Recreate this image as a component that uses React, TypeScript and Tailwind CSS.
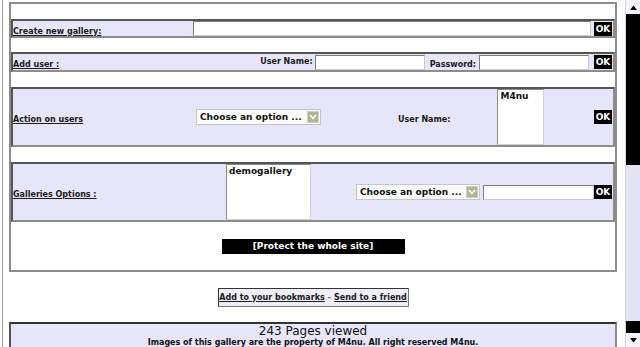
import type { ReactNode } from "react";

function OkButton({ className = "" }: { className?: string }) {
  return (
    <div
      className={`w-[18px] h-[14px] bg-black text-white text-[9px] font-bold leading-[14px] text-center shrink-0 ${className}`}
    >
      OK
    </div>
  );
}

function TextBox({ width, className = "" }: { width: string; className?: string }) {
  return (
    <div
      className={`${width} h-[15px] bg-white border border-[#7c7c7c] border-r-[#c9c9d0] border-b-[#c9c9d0] shrink-0 ${className}`}
    />
  );
}

function SelectBox({ width, className = "" }: { width: string; className?: string }) {
  return (
    <div
      className={`${width} h-[16px] bg-[#fbfbfb] border border-[#c4c4cc] flex items-center justify-between pl-[3px] pr-[1px] shrink-0 ${className}`}
    >
      <span className="text-[9px] font-bold text-[#111] leading-none whitespace-nowrap">Choose an option ...</span>
      <div className="w-[12px] h-[12px] bg-[#a9b797] border border-[#c8d2bc] flex items-center justify-center">
        <svg width="8" height="6" viewBox="0 0 8 6">
          <path d="M1 1 L4 4.5 L7 1" stroke="white" strokeWidth="1.6" fill="none" />
        </svg>
      </div>
    </div>
  );
}

function ListBox({ width, item, className = "" }: { width: string; item: string; className?: string }) {
  return (
    <div
      className={`${width} h-[56px] bg-white border border-[#8a8a8a] border-r-[#d0d0d8] border-b-[#d0d0d8] pl-[2px] pt-[1px] shrink-0 ${className}`}
    >
      <div className="text-[9px] font-bold text-[#111] leading-[11px]">{item}</div>
    </div>
  );
}

function Label({ children }: { children: ReactNode }) {
  return (
    <span className="text-[8px] font-bold text-[#1a1a1a] underline underline-offset-1 whitespace-nowrap">
      {children}
    </span>
  );
}

function Row({ children, className = "" }: { children: ReactNode; className?: string }) {
  return (
    <div
      className={`bg-[#e6e6f8] border-2 border-t-[#555] border-l-[#555] border-b-[#8c8c8c] border-r-[#8c8c8c] flex items-center pr-[1px] shrink-0 ${className}`}
    >
      {children}
    </div>
  );
}

function Field({ children }: { children: ReactNode }) {
  return <span className="text-[8px] font-bold text-[#1a1a1a] whitespace-nowrap">{children}</span>;
}

function Scrollbar() {
  return (
    <div className="w-[15px] h-[347px] flex flex-col bg-[#e4e4f4] border-l border-[#d4d4dc] shrink-0">
      <div className="h-[14px] bg-[#f4f4fa] flex items-center justify-center">
        <svg width="7" height="5" viewBox="0 0 7 5">
          <path d="M0 5 L3.5 0.5 L7 5 Z" fill="black" />
        </svg>
      </div>
      <div className="h-[151px] bg-black" />
      <div className="flex-1" />
      <div className="h-[12px] bg-black" />
      <div className="h-[14px] bg-[#f4f4fa] flex items-center justify-center">
        <svg width="7" height="5" viewBox="0 0 7 5">
          <path d="M0 0 L3.5 4.5 L7 0 Z" fill="black" />
        </svg>
      </div>
    </div>
  );
}

export default function App() {
  return (
    <div
      className="w-[640px] h-[347px] overflow-hidden bg-white flex"
      style={{ fontFamily: '"DejaVu Sans", Verdana, sans-serif' }}
    >
      <div className="w-[625px] h-[347px] flex shrink-0">
        <div className="ml-[2px] w-[1px] h-full bg-[#a0a0a0]" />
        <div className="ml-[6px] w-[608px] flex flex-col">
          {/* admin panel */}
          <div className="mt-[2px] h-[270px] shrink-0 border-2 border-[#8c8c8c] flex flex-col pt-[15px]">
            <Row className="h-[19px]">
              <div className="w-[180px]">
                <Label>Create new gallery:</Label>
              </div>
              <TextBox width="w-[398px]" />
              <OkButton className="ml-auto" />
            </Row>

            <Row className="h-[20px] mt-[14px]">
              <div className="flex-1">
                <Label>Add user :</Label>
              </div>
              <Field>User Name:</Field>
              <TextBox width="w-[110px]" className="ml-[2px]" />
              <span className="ml-[5px]">
                <Field>Password:</Field>
              </span>
              <TextBox width="w-[110px]" className="ml-[3px]" />
              <OkButton className="ml-[5px]" />
            </Row>

            <Row className="h-[60px] mt-[15px]">
              <div className="w-[183px]">
                <Label>Action on users</Label>
              </div>
              <SelectBox width="w-[125px]" />
              <span className="ml-[77px]">
                <Field>User Name:</Field>
              </span>
              <ListBox width="w-[47px]" item="M4nu" className="ml-[47px]" />
              <OkButton className="ml-auto" />
            </Row>

            <Row className="h-[60px] mt-[15px]">
              <div className="w-[213px]">
                <Label>Galleries Options :</Label>
              </div>
              <ListBox width="w-[85px]" item="demogallery" />
              <SelectBox width="w-[124px]" className="ml-[45px]" />
              <TextBox width="w-[111px]" className="ml-[3px]" />
              <OkButton className="ml-auto" />
            </Row>

            <div className="mt-[17px] flex justify-center shrink-0">
              <div className="w-[183px] h-[15px] bg-black text-white text-[9px] font-bold leading-[15px] text-center">
                [Protect the whole site]
              </div>
            </div>
          </div>

          {/* links */}
          <div className="mt-[16px] flex justify-center shrink-0">
            <div className="w-[191px] h-[19px] bg-[#eeeef8] border border-[#333] border-r-[#777] border-b-[#777] flex items-center justify-center">
              <span className="text-[8px] font-bold text-[#1a1a1a] underline underline-offset-1">Add to your bookmarks</span>
              <span className="text-[8px] font-bold text-[#666] mx-[3px]">-</span>
              <span className="text-[8px] font-bold text-[#1a1a1a] underline underline-offset-1">Send to a friend</span>
            </div>
          </div>

          {/* footer */}
          <div className="mt-[15px] h-[40px] shrink-0 bg-[#e6e6f8] border-2 border-t-[#333] border-l-[#555] border-r-[#8c8c8c] border-b-0 flex flex-col items-center">
            <div className="text-[12px] text-[#111] leading-[14px]">243 Pages viewed</div>
            <div className="text-[8px] font-bold text-[#111] leading-[10px] whitespace-nowrap">
              Images of this gallery are the property of M4nu. All right reserved M4nu.
            </div>
          </div>
        </div>
      </div>
      <Scrollbar />
    </div>
  );
}
